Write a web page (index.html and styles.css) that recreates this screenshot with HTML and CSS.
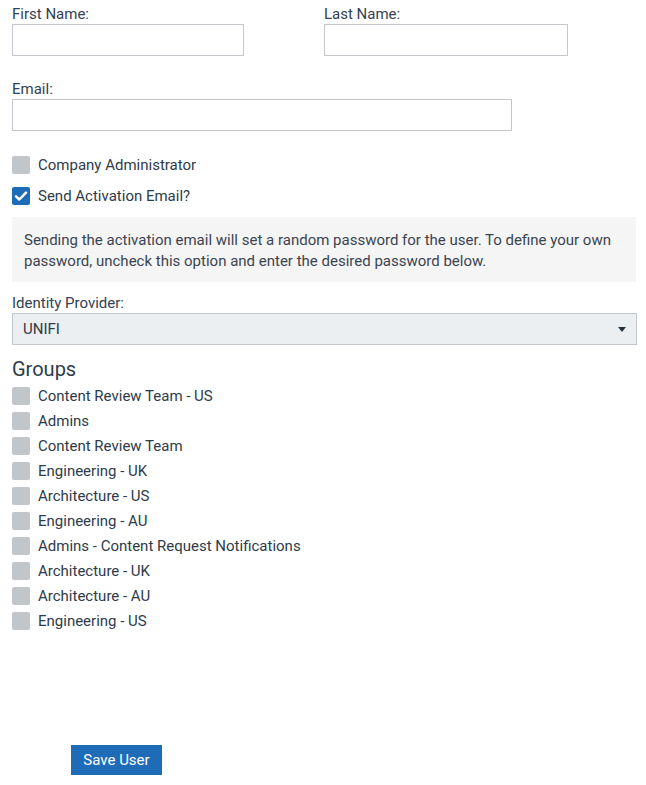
FILE: index.html
```html
<!DOCTYPE html>
<html>
<head>
<meta charset="utf-8">
<link rel="stylesheet" href="styles.css">
</head>
<body>
<form class="user-form">
  <div class="name-row">
    <div class="field">
      <label class="field-label">First Name:</label>
      <input class="text-input first" type="text">
    </div>
    <div class="field">
      <label class="field-label">Last Name:</label>
      <input class="text-input last" type="text">
    </div>
  </div>
  <div class="field email-field">
    <label class="field-label">Email:</label>
    <input class="text-input email" type="text">
  </div>

  <div class="check-row opt-first"><span class="box"></span><span>Company Administrator</span></div>
  <div class="check-row opt"><span class="box checked"><svg viewBox="0 0 18 18" width="18" height="18"><path d="M4 9.3l3.3 3.2L14 5.6" fill="none" stroke="#fff" stroke-width="2.5" stroke-linecap="round" stroke-linejoin="round"/></svg></span><span>Send Activation Email?</span></div>

  <div class="info-box">Sending the activation email will set a random password for the user. To define your own password, uncheck this option and enter the desired password below.</div>

  <div class="field idp-field">
    <label class="field-label">Identity Provider:</label>
    <div class="select"><span>UNIFI</span><span class="caret"></span></div>
  </div>

  <h2 class="groups-title">Groups</h2>
  <div class="groups">
    <div class="check-row group"><span class="box"></span><span>Content Review Team - US</span></div>
    <div class="check-row group"><span class="box"></span><span>Admins</span></div>
    <div class="check-row group"><span class="box"></span><span>Content Review Team</span></div>
    <div class="check-row group"><span class="box"></span><span>Engineering - UK</span></div>
    <div class="check-row group"><span class="box"></span><span>Architecture - US</span></div>
    <div class="check-row group"><span class="box"></span><span>Engineering - AU</span></div>
    <div class="check-row group"><span class="box"></span><span>Admins - Content Request Notifications</span></div>
    <div class="check-row group"><span class="box"></span><span>Architecture - UK</span></div>
    <div class="check-row group"><span class="box"></span><span>Architecture - AU</span></div>
    <div class="check-row group"><span class="box"></span><span>Engineering - US</span></div>
  </div>

  <div class="actions"><button class="save-btn" type="button">Save User</button></div>
</form>
</body>
</html>
```

FILE: styles.css
```css
html, body {
  margin: 0;
  padding: 0;
  background: #ffffff;
}
body {
  font-family: Roboto, "Liberation Sans", sans-serif;
  font-size: 15px;
  color: #2e3b49;
}
.user-form {
  padding: 4px 10px 0 12px;
}
.name-row {
  display: grid;
  grid-template-columns: 312px 312px;
}
.field {
  display: flex;
  flex-direction: column;
  align-items: flex-start;
}
.field-label {
  display: block;
  line-height: 20px;
  height: 20px;
  color: #34414f;
}
.text-input {
  box-sizing: border-box;
  height: 32px;
  border: 1px solid #c3c7cb;
  border-radius: 0;
  background: #fff;
  margin: 0;
  padding: 0 8px;
  font: inherit;
}
.text-input.first { width: 232px; }
.text-input.last { width: 244px; }
.text-input.email { width: 500px; }
.email-field { margin-top: 23px; }
.check-row {
  display: flex;
  align-items: center;
  gap: 8px;
  line-height: 18px;
  font-size: 15px;
}
.opt-first { margin-top: 25px; }
.opt { margin-top: 13px; }
.box {
  box-sizing: border-box;
  width: 18px;
  height: 18px;
  flex: none;
  border-radius: 2px;
  background: #c1c6cb;
  display: flex;
  align-items: center;
  justify-content: center;
}
.box.checked {
  background: #1e6bb8;
}
.box svg { display: block; }
.info-box {
  margin-top: 12px;
  background: #f5f5f5;
  padding: 13px 12px 10px 12px;
  line-height: 21px;
  color: #3a4450;
}
.idp-field { margin-top: 11px; }
.select {
  box-sizing: border-box;
  width: 625px;
  height: 32px;
  background: #eceff1;
  border: 1px solid #c3c7cb;
  display: flex;
  align-items: center;
  justify-content: space-between;
  padding: 0 10px 0 10px;
  color: #2e3b49;
}
.caret {
  width: 0;
  height: 0;
  border-left: 4px solid transparent;
  border-right: 4px solid transparent;
  border-top: 5px solid #26323e;
}
.groups-title {
  margin: 10px 0 0 0;
  font-size: 20px;
  font-weight: 400;
  line-height: 28px;
  color: #2e3b49;
}
.groups {
  display: flex;
  flex-direction: column;
  gap: 7px;
  margin-top: 4px;
}
.actions {
  margin-top: 115px;
  padding-left: 59px;
}
.save-btn {
  width: 91px;
  height: 30px;
  border: none;
  border-radius: 0;
  background: #1e6bb8;
  color: #fff;
  font-family: Roboto, "Liberation Sans", sans-serif;
  font-size: 15px;
  padding: 0;
}
```
